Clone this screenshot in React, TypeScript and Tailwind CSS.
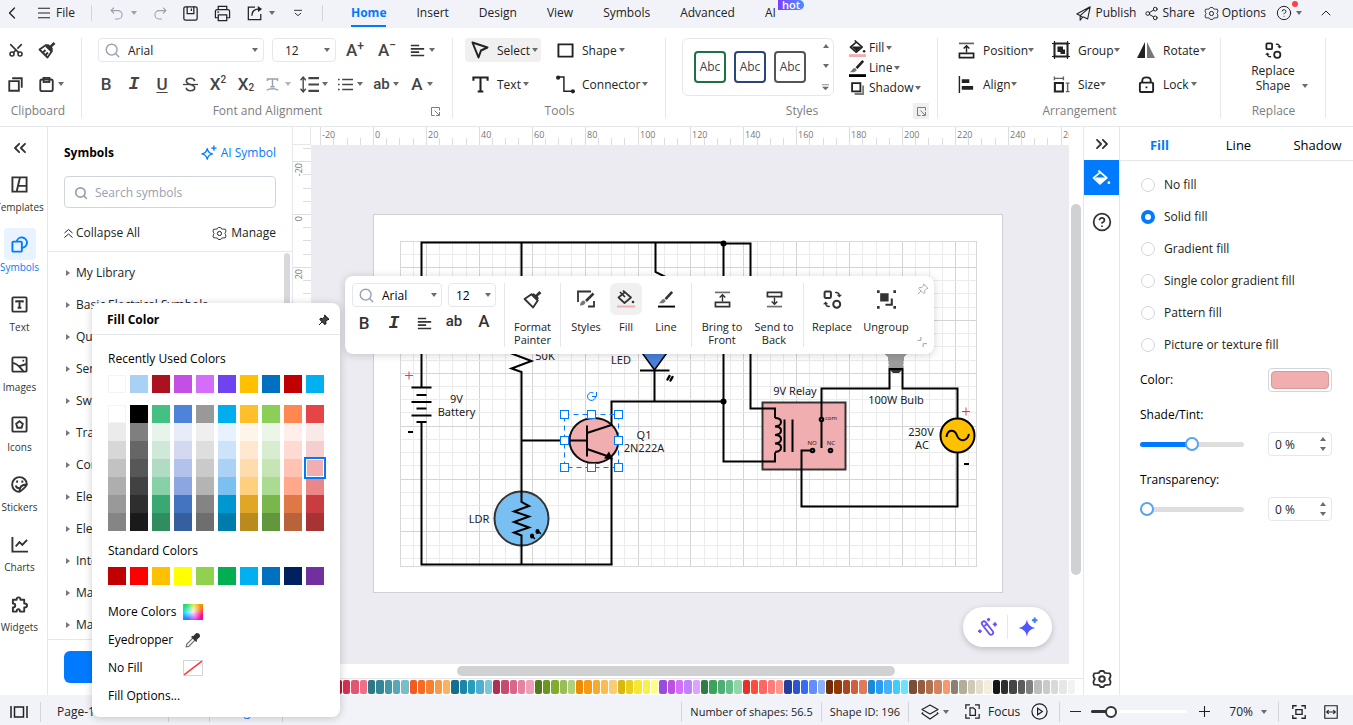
import React, { useState } from "react";
import { ChevronsLeft, ChevronsRight, ChevronUp, ChevronLeft, CircleHelp, Scissors, Share2, Search } from "lucide-react";

interface IconProps {
  size?: number;
  sw?: number;
  className?: string;
  children: React.ReactNode;
}

// Base for all the line icons, drawn on an 18 x 18 grid
function Icon({ size = 18, sw = 2, className = "", children }: IconProps) {
  return (
    <svg
      width={size}
      height={size}
      viewBox="0 0 18 18"
      fill="none"
      stroke="currentColor"
      strokeWidth={sw}
      className={`shrink-0 ${className}`}
      aria-hidden="true"
    >
      {children}
    </svg>
  );
}

function Caret({ className = "" }: { className?: string }) {
  return (
    <svg width="6" height="4" viewBox="0 0 6 4" className={`shrink-0 fill-[#6b6b6b] ${className}`} aria-hidden="true">
      <path d="M0 0h6L3 4z" />
    </svg>
  );
}

const GearIcon = ({ size = 16, sw = 1.4 }: { size?: number; sw?: number }) => (
  <Icon size={size} sw={sw}>
    <path d="M6.2 2.2 7.4 1h3.2l1.2 1.9 2.3.3 2.7.1.8 2.2-.4 1.7-1 1.8 1 1.8.4 1.7-.8 2.2-2.7.1-2.3.3L10.6 17H7.4l-1.2-1.9-2.3-.3-2.7-.1-.8-2.2.4-1.7 1-1.8-1-1.8-.4-1.7.8-2.2 2.7-.1 2.3-.3z" strokeLinejoin="round" transform="translate(.9 .9) scale(.9)" />
    <circle cx="9" cy="9" r="2.500" />
  </Icon>
);

const BrushIcon = ({ size = 18, solid = false }: { size?: number; solid?: boolean }) => (
  <Icon size={size} sw={1.8}>
    <path d="M1.500 8.500 8 4l6 6-4.500 6.500z" strokeLinejoin="round" />
    <path d="M7.500 4.500 10 3l2 1.500L15.500 1 17.500 3 14 6l1 2-1.500 2z" fill="currentColor" stroke="none" />
    {solid && <path d="M5 11.500 7.500 9M7.500 14 10 11.500M8 5l5.500 5.500" />}
  </Icon>
);

// The filled look is half full; the outline one is used in the floating bar
const BucketIcon = ({ size = 18, color = "", outline = false }: { size?: number; color?: string; outline?: boolean }) => (
  <Icon size={size} sw={1.7}>
    <path d="M6 .5 14 7.500l-6.500 5.500L1.500 7.500 7.500 2.500" strokeLinejoin="round" />
    {outline ? <path d="M3 2l5 5" /> : <path d="M2.500 7h11L8 12.500z" fill="currentColor" stroke="none" />}
    <circle cx="16" cy="12" r="1.300" fill="currentColor" stroke="none" />
    {color && <path d="M0 16.500h18" stroke={color} strokeWidth={outline ? 2 : 3} />}
  </Icon>
);

const LineIcon = ({ size = 18, thin = false }: { size?: number; thin?: boolean }) => (
  <Icon size={size}>
    <path d="M15 1 8 8.500" strokeWidth="2.800" />
    <path d="M7.500 9 5 8.500 1 13h4.500L8 11z" fill="#777" stroke="none" />
    <path d="M0 16.500h18" stroke="#000" strokeWidth={thin ? 2 : 3} />
  </Icon>
);

const AlignTextIcon = () => (
  <Icon size={15} sw={2}>
    <path d="M1 3h10M1 7h16M1 11h10M1 15h16" />
  </Icon>
);

const FrontIcon = ({ size = 18 }: { size?: number }) => (
  <Icon size={size} sw={1.8}>
    <path d="M1 1.500h16" className="opacity-70" />
    <path d="M9 11V4.500M6 7l3-3 3 3" strokeWidth="1.500" />
    <path d="M1.500 12h15v4.500h-15z" />
  </Icon>
);

const BackIcon = ({ size = 18 }: { size?: number }) => (
  <Icon size={size} sw={1.8}>
    <path d="M1 16.500h16" className="opacity-70" />
    <path d="M9 7v6.500M6 11l3 3 3-3" strokeWidth="1.500" />
    <path d="M1.500 1.500h15V6h-15z" />
  </Icon>
);

const ReplaceIcon = ({ size = 18 }: { size?: number }) => (
  <Icon size={size} sw={1.9}>
    <rect x="1.500" y="1.500" width="6" height="6" rx="1" />
    <circle cx="13" cy="13.500" r="3.300" />
    <path d="M11.500 2.500c2.500-.5 4 .5 4 3M6.500 15.500c-2.500.5-4-.5-4-3" strokeWidth="1.400" />
    <path d="M13 4.500h5L15.500 7zM0 13.500h5L2.500 11z" fill="currentColor" stroke="none" />
  </Icon>
);

const PinIcon = ({ solid = false }: { solid?: boolean }) => (
  <Icon size={12} sw={1.4} className={solid ? "fill-[#444]" : "text-gray-400"}>
    <path d="M10 1.500 16.500 8l-2 .5-3 3 .5 3-1.500 1.500L2.500 8 4 6.500l3 .5 3-3zM6 12l-4.500 4.500" strokeLinejoin="round" />
  </Icon>
);

const LauncherIcon = () => (
  <Icon size={9} sw={2}>
    <path d="M7 17H1V1h16v6M7 7l9 9M17 10v7h-7" />
  </Icon>
);

const tabs = ["Home", "Insert", "Design", "View", "Symbols", "Advanced"];

function TopBar() {
  return (
    <header className="flex h-7 shrink-0 items-center bg-[#f2f3f9] text-[#222]">
      <div className="flex w-[336px] shrink-0 items-center pb-[2px]">
        <button type="button" aria-label="Back" className="ml-[2px]"><ChevronLeft className="size-5" strokeWidth={1.6} /></button>
        <button type="button" className="ml-4 flex items-center gap-[6px]">
          <Icon size={12} sw={1.6}><path d="M0 2h18M0 9h18M0 16h18" /></Icon>
          File
        </button>
        <span className="ml-4 h-4 w-px bg-gray-300" />
        <button type="button" aria-label="Undo" className="ml-[18px] flex items-center gap-2 text-gray-400">
          <Icon size={13} sw={1.5}><path d="M5.500 1 1.500 5l4 4M1.500 5H11a5 5 0 0 1 0 11.500H7" /></Icon>
          <Caret className="opacity-60" />
        </button>
        <button type="button" aria-label="Redo" className="ml-[17px] text-gray-400">
          <Icon size={13} sw={1.5}><path d="m12.500 1 4 4-4 4M16.500 5H7a5 5 0 0 0 0 11.500h4" /></Icon>
        </button>
        <button type="button" aria-label="Save" className="ml-4">
          <Icon size={15} sw={1.5}><rect x="1" y="1" width="16" height="16" rx="2" /><path d="M5 1v8h8V1M10 3v3" /></Icon>
        </button>
        <button type="button" aria-label="Print" className="ml-4">
          <Icon size={17} sw={1.3}><path d="M4.500 5V1.500h9V5M4.500 13.500h-3V7q0-2 2-2h11q2 0 2 2v6.500h-3" /><path d="M4.500 10.500h9v6h-9zM3.500 7.500h2" /></Icon>
        </button>
        <button type="button" aria-label="Export" className="ml-4 flex items-center gap-[6px]">
          <Icon size={16} sw={1.4}><path d="M9 2.500H1.500v14h14V10" /><path d="M5.500 12c0-5 3-7.500 8-7.500" /><path d="m12 1 5 3.500-4.500 3.500z" fill="currentColor" stroke="none" /></Icon>
          <Caret />
        </button>
        <button type="button" aria-label="More" className="ml-[19px]">
          <Icon size={8} sw={2}><path d="M0 3h18M2 9l7 6 7-6" /></Icon>
        </button>
        <span className="ml-5 h-4 w-px bg-gray-300" />
      </div>
      <nav className="flex h-7 items-stretch gap-7 pl-[15px]">
        {tabs.map((t) => (
          <button
            key={t}
            type="button"
            className={`mr-[2px] mb-px border-b-2 pt-px ${t === "Home" ? "border-[#007bff] font-bold text-[#007bff]" : "border-transparent"}`}
          >
            {t}
          </button>
        ))}
        <button type="button" className="relative mb-px border-b-2 border-transparent pt-px">
          AI
          <span className="absolute top-0 left-[13px] rounded-tl-md rounded-r-full bg-linear-to-r from-[#7c3aff] to-[#3f8cff] px-1 text-[11px] leading-[10px] font-semibold text-white">hot</span>
        </button>
      </nav>
      <div className="ml-auto flex items-center pr-[19px] pb-[2px]">
        <button type="button" className="flex items-center gap-1">
          <Icon size={15} sw={1.3}><path d="M17 1 1 9.500l4 2L17 1l-3 14.500-5.500-2.500M5 11.500V17l3-3.500z" strokeLinejoin="round" /></Icon>
          Publish
        </button>
        <button type="button" className="ml-2 flex items-center gap-[3px]"><Share2 className="size-[15px]" strokeWidth={1.6} />Share</button>
        <button type="button" className="ml-[9px] flex items-center gap-[3px]"><GearIcon size={15} sw={1.2} />Options</button>
        <button type="button" aria-label="Help" className="relative ml-[10px] flex items-center gap-1">
          <CircleHelp className="size-4" strokeWidth={1.5} />
          <Caret />
          <span className="absolute -top-[4px] left-4 size-[6px] rounded-full bg-[#ff4040]" />
        </button>
        <button type="button" aria-label="Collapse ribbon" className="ml-4"><ChevronUp className="size-4" strokeWidth={1.5} /></button>
      </div>
    </header>
  );
}

interface GroupProps {
  label: string;
  className: string;
  launcher?: React.ReactNode;
  children: React.ReactNode;
}

function RibbonGroup({ label, className, launcher, children }: GroupProps) {
  return (
    <section className={`flex h-20 shrink-0 flex-col border-r border-gray-200 ${className}`}>
      <div className="h-16 shrink-0">{children}</div>
      <div className="relative shrink-0 pl-px text-center leading-[18px] text-[#7d7d7d]">
        {label}
        {launcher}
      </div>
    </section>
  );
}

interface ToolButtonProps {
  icon: React.ReactNode;
  label: string;
  className?: string;
  tight?: boolean;
}

function ToolButton({ icon, label, className = "", tight = false }: ToolButtonProps) {
  return (
    <button type="button" className={`flex h-6 items-center rounded ${className}`}>
      <span className="mr-2 flex w-[18px] justify-center">{icon}</span>
      <span className="pt-px">{label}</span>
      <Caret className={tight ? "" : "ml-[2px]"} />
    </button>
  );
}

interface FontSelectProps {
  label: string;
  value: string;
  search?: boolean;
  className: string;
}

function FontSelect({ label, value, search = false, className }: FontSelectProps) {
  return (
    <label className={`flex h-6 items-center rounded border border-gray-200 bg-white ${className}`}>
      {search && <Icon size={15} sw={1.7} className="mr-1 ml-[6px] text-gray-400"><circle cx="8" cy="8" r="6.500" /><path d="m13 13 4 4" /></Icon>}
      <select aria-label={label} defaultValue={value} className="w-0 min-w-0 flex-1 appearance-none bg-transparent pt-px pl-1 outline-none">
        <option>{value}</option>
      </select>
      <Caret />
    </label>
  );
}

const styleCards = [
  { name: "Green style", css: "border-[#1e7145]" },
  { name: "Blue style", css: "border-[#26467d]" },
  { name: "Gray style", css: "border-[#555555]" },
];

const letter = "font-['Roboto','Noto_Sans',sans-serif] text-[17px] leading-5 font-medium";
const italicLetter = "font-['Liberation_Mono',monospace] text-[18px] leading-5 font-bold italic";

function Ribbon() {
  return (
    <div className="flex h-[99px] shrink-0 border-b border-gray-200 bg-white pt-[10px] text-[#222]">
      <RibbonGroup label="Clipboard" className="w-[82px] [&>div:last-child]:pr-[6px]">
        <div className="flex flex-col gap-[10px] pl-2 text-[#333]">
          <div className="flex h-6 items-center gap-[14px]">
            <button type="button" aria-label="Cut"><Scissors className="size-4 -rotate-90" strokeWidth={2.4} /></button>
            <button type="button" aria-label="Format painter"><BrushIcon solid /></button>
          </div>
          <div className="flex h-6 items-center gap-4">
            <button type="button" aria-label="Copy"><Icon size={15} sw={2.2}><path d="M1.500 5h11.500v11.500H1.500z" /><path d="M5 1.500h11.500V13" /></Icon></button>
            <button type="button" aria-label="Paste" className="flex items-center gap-1">
              <Icon size={15} sw={2.2}><rect x="1.500" y="3" width="15" height="14" rx="2" /><rect x="5.500" y="1" width="7" height="5" /></Icon>
              <Caret />
            </button>
          </div>
        </div>
      </RibbonGroup>

      <RibbonGroup
        label="Font and Alignment"
        className="w-[371px]"
        launcher={<button type="button" aria-label="Font settings" className="absolute top-[5px] right-3"><LauncherIcon /></button>}
      >
        <div className="flex h-6 items-center pl-4">
          <FontSelect label="Font" value="Arial" search className="w-[166px] pr-[5px]" />
          <FontSelect label="Font size" value="12" className="ml-2 w-16 pr-[5px] pl-2" />
          <button type="button" aria-label="Increase font size" className={`ml-[10px] flex w-[18px] text-[#444] ${letter}`}>A<span className="-mt-1 text-[12px]">+</span></button>
          <button type="button" aria-label="Decrease font size" className={`ml-[14px] flex w-[18px] text-[#444] ${letter}`}>A<span className="-mt-[5px] text-[12px]">−</span></button>
          <button type="button" aria-label="Align text" className="ml-[14px] flex items-center gap-1 text-[#333]">
            <AlignTextIcon />
            <Caret />
          </button>
        </div>
        <div className="mt-[10px] flex h-6 items-center pl-[10px] text-[#444]">
          <button type="button" className={`w-7 ${letter}`}>B</button>
          <button type="button" className={`w-7 ${italicLetter}`}>I</button>
          <button type="button" className={`w-7 ${letter} underline underline-offset-2`}>U</button>
          <button type="button" aria-label="Strikethrough" className="flex w-7 justify-center">
            <Icon size={15} sw={2}><path d="M14 5c-.5-2.500-2-3.500-5-3.500S4 3 4 4.500 5.500 8 9 9s5 2 5 4-2 3.500-5 3.500-5-1.500-5-3.500" /><path d="M0 9h18" strokeWidth="1.500" /></Icon>
          </button>
          <button type="button" className={`flex w-7 justify-center ${letter}`}>X<span className="text-[10px] leading-3">2</span></button>
          <button type="button" className={`flex w-7 items-end justify-center ${letter}`}>X<span className="text-[10px] leading-3">2</span></button>
          <button type="button" aria-label="Text effects" className="flex w-9 items-center justify-center gap-[6px] text-gray-400">
            <Icon size={13}><path d="M2 4V1.500h14V4M9 1.500V12M6 12h6" /><path d="M1 17c4-3 12-3 16 0" /></Icon>
            <Caret className="opacity-50" />
          </button>
          <button type="button" aria-label="Line spacing" className="flex w-9 items-center justify-center gap-[3px]">
            <Icon size={19} sw={2}><path d="M8 3h10M8 9h10M8 15h10" /><path d="M3 2v14M.5 5 3 2l2.500 3M.5 13 3 16l2.500-3" strokeWidth="1.300" /></Icon>
            <Caret />
          </button>
          <button type="button" aria-label="Bullets" className="flex w-9 items-center justify-center gap-1">
            <Icon size={15} sw={2}><path d="M5 3h13M5 9h13M5 15h13" /><path d="M0 3h2M0 9h2M0 15h2" /></Icon>
            <Caret />
          </button>
          <button type="button" aria-label="Change case" className="flex w-9 items-center justify-center gap-[3px] font-['Roboto','Noto_Sans',sans-serif] text-[15px] font-medium">ab<Caret /></button>
          <button type="button" aria-label="Font color" className={`flex w-9 items-center justify-center gap-1 ${letter}`}>A<Caret /></button>
        </div>
      </RibbonGroup>

      <RibbonGroup label="Tools" className="w-[213px]">
        <div className="grid grid-cols-[85px_1fr] gap-y-[10px] pl-3">
          <ToolButton className="w-19 bg-[#f0f0f0] pl-[6px]" label="Select" icon={<Icon size={18} sw={2}><path d="m1.500 1.500 15 5L10 9.500 7.500 16.500z" strokeLinejoin="round" /></Icon>} />
          <ToolButton className="pl-[6px]" label="Shape" icon={<Icon size={17}><path d="M1.500 2.500h15v13h-15z" /></Icon>} />
          <ToolButton className="pl-[6px]" label="Text" icon={<Icon size={17} sw={2.2}><path d="M1.500 5V1.500h15V5M9 1.500v15M6 16.500h6" /></Icon>} />
          <ToolButton
            className="pl-[6px]"
            label="Connector"
            icon={<Icon size={19} sw={1.4}><path d="M2 2h5.500v13.500H15" /><circle cx="2" cy="2.500" r="2" fill="currentColor" stroke="none" /><circle cx="16" cy="15.500" r="2" fill="currentColor" stroke="none" /></Icon>}
          />
        </div>
      </RibbonGroup>

      <RibbonGroup
        label="Styles"
        className="w-[272px]"
        launcher={<button type="button" aria-label="Style settings" className="absolute top-px right-2 flex size-4 items-center justify-center bg-[#efefef]"><LauncherIcon /></button>}
      >
        <div className="flex pl-4">
          <div className="flex h-[58px] w-[152px] items-center gap-2 rounded-md border border-gray-200 pl-[11px]">
            {styleCards.map((c) => (
              <button key={c.name} type="button" aria-label={c.name} className={`size-8 rounded border-2 text-[12px] text-[#444] ${c.css}`}>Abc</button>
            ))}
            <div className="ml-2 flex flex-col items-center gap-4">
              <Caret className="rotate-180" />
              <Caret />
              <Icon size={7} className="text-[#6b6b6b]"><path d="M0 2h18" /><path d="M0 7h18L9 16z" fill="currentColor" stroke="none" /></Icon>
            </div>
          </div>
          <div className="ml-[15px] flex flex-col">
            {[
              { label: "Fill", icon: <BucketIcon size={17} color="#f0aeb0" /> },
              { label: "Line", icon: <LineIcon size={17} /> },
              { label: "Shadow", icon: <Icon size={13} sw={2.5}><path d="M1.500 1.500H13V13H1.500z" /><path d="M5 16.500h12V5" strokeWidth="3" className="opacity-60" /></Icon> },
            ].map((r) => (
              <button key={r.label} type="button" className="flex h-5 items-center">
                <span className="mr-[3px] flex w-[17px] justify-center">{r.icon}</span>
                {r.label}
                <Caret className="ml-[2px]" />
              </button>
            ))}
          </div>
        </div>
      </RibbonGroup>

      <RibbonGroup label="Arrangement" className="w-[283px]">
        <div className="grid grid-cols-[95px_85px_1fr] gap-y-[10px] pl-[19px]">
          <ToolButton tight label="Position" icon={<FrontIcon size={17} />} />
          <ToolButton
            tight
            label="Group"
            icon={<Icon size={18} sw={2}><path d="M2.500 2.500h13v13h-13z" /><path d="M6.500 6.500H10V10H6.500z" fill="currentColor" /><path d="M12 8.500V12H8.500" /><path d="M0 2.500h5M13 2.500h5M0 15.500h5M13 15.500h5M2.500 0v5M15.500 0v5M2.500 13v5M15.500 13v5" strokeWidth="1.200" /></Icon>}
          />
          <ToolButton tight label="Rotate" icon={<Icon size={18}><path d="M8 1v16H0z" fill="currentColor" stroke="none" /><path d="M10 1v16h8z" fill="#777" stroke="none" /></Icon>} />
          <ToolButton tight label="Align" icon={<Icon size={17}><path d="M1.500 0v18" strokeWidth="1.500" /><path d="M4 5.500h8M4 12.500h12" strokeWidth="4" /></Icon>} />
          <ToolButton
            tight
            label="Size"
            icon={<Icon size={17} sw={1.5}><path d="M2 7.500h8.500v9H2z" strokeWidth="2.200" /><path d="M1.500 2.500H11M1.500.5v4M11 .5v4M15.500 7.500v9M13.500 7.500h4M13.500 16.500h4" className="opacity-70" /></Icon>}
          />
          <ToolButton label="Lock" icon={<Icon size={17} sw={2}><rect x="2" y="7" width="14" height="10" rx="1" /><path d="M4.500 7V5q0-3.500 4.500-3.500T13.500 5v2M9 11v2" /></Icon>} />
        </div>
      </RibbonGroup>

      <RibbonGroup label="Replace" className="w-[105px]">
        <button type="button" className="relative flex w-full flex-col items-center pt-1 leading-[15px]">
          <ReplaceIcon size={17} />
          <span className="mt-1">Replace<br />Shape</span>
          <Caret className="absolute right-[17px] bottom-[5px]" />
        </button>
      </RibbonGroup>
    </div>
  );
}

const navItems = [
  { label: "Templates", icon: <path d="M1.500 1.500h15v15h-15zM6 16.500l3.500-15M7.500 10.500h9" /> },
  { label: "Symbols", icon: <><rect x="1.500" y="6" width="10" height="10.500" rx="1" /><path d="M6 6a5.500 5.500 0 1 1 5.500 6.500" /></> },
  { label: "Text", icon: <><rect x="1.500" y="1.500" width="15" height="15" rx="1" /><path d="M5.500 7V5.500h7V7M9 5.500v7M7 12.500h4" /></> },
  { label: "Images", icon: <><rect x="1.500" y="1.500" width="15" height="15" rx="1" /><path d="M1.500 7.500c6 0 8 5 12 9M8 11l8.500-2.500" /><circle cx="13" cy="5" r="1" fill="currentColor" stroke="none" /></> },
  { label: "Icons", icon: <><rect x="1.500" y="1.500" width="15" height="15" rx="1" /><path d="m9 5.500 3.500 2.700-1.300 4.300H6.800L5.500 8.200z" /></> },
  { label: "Stickers", icon: <><path d="M16.800 9A7.800 7.800 0 1 0 9 16.800c1 0 7.800-6.500 7.800-7.800zM9 16.500c0-5 3-7.500 7.500-7.500M5 10c.5 2 2 3 4 3" /><path d="M5.500 6h2M11 6h2" strokeWidth="2.500" /></> },
  { label: "Charts", icon: <path d="M1.500 1v15.500H18M5 11l4-4.500 3 3L17 4" /> },
  { label: "Widgets", icon: <path d="M2 4h4q0-2.500 2-2.500T10 4h4v4q3 0 3 2t-3 2v4.500H9.500q0-2.500-1.700-2.500T6 16.500H2V12q2.500 0 2.500-2T2 8z" strokeLinejoin="round" /> },
];

function NavRail() {
  return (
    <nav className="flex w-12 shrink-0 flex-col border-r border-gray-200 bg-white text-[#333]">
      <button type="button" aria-label="Collapse panel" className="flex h-[41px] w-10 items-center justify-center"><ChevronsLeft className="size-5" strokeWidth={2.2} /></button>
      {navItems.map((n) => {
        const active = n.label === "Symbols";
        return (
          <button key={n.label} type="button" className={`flex h-15 w-[39px] flex-col items-center text-[10px] leading-[14px] ${active ? "text-[#007bff]" : ""}`}>
            <span className={`flex size-8 shrink-0 items-center justify-center rounded ${active ? "bg-[#e8f3ff]" : ""}`}>
              <Icon size={17} sw={2}>{n.icon}</Icon>
            </span>
            {n.label}
          </button>
        );
      })}
    </nav>
  );
}

const libraries = [
  "My Library",
  "Basic Electrical Symbols",
  "Qualifying",
  "Semiconductor",
  "Switches",
  "Transmission",
  "Composite",
  "Electrical",
  "Electronic",
  "Integrated",
  "Machines",
  "Maintenance",
];

function SymbolsPanel() {
  return (
    <aside className="flex w-[245px] shrink-0 flex-col border-r border-gray-200 bg-white text-[#222]">
      <div className="flex items-center justify-between px-4 pt-[17px]">
        <h2 className="font-bold text-black">Symbols</h2>
        <button type="button" className="flex items-center gap-1 text-[#007bff]">
          <Icon size={16} sw={1.5}><path d="M7 4q1 5 6 6-5 1-6 6-1-5-6-6 5-1 6-6zM14.500.5v6M11.500 3.500h6" strokeLinejoin="round" /></Icon>
          AI Symbol
        </button>
      </div>
      <label className="mx-4 mt-[14px] flex h-8 items-center rounded border border-gray-300 pt-px pl-[9px]">
        <Search className="size-[14px] text-gray-400" strokeWidth={3} />
        <input aria-label="Search symbols" placeholder="Search symbols" className="ml-[7px] w-0 flex-1 outline-none placeholder:text-gray-400" />
      </label>
      <div className="flex h-11 items-center justify-between border-b border-gray-200 px-4 pt-[7px]">
        <button type="button" className="flex items-center gap-[3px]">
          <Icon size={9} sw={2}><path d="m1 8 8-7 8 7M1 17l8-7 8 7" /></Icon>
          Collapse All
        </button>
        <button type="button" className="flex items-center gap-1"><GearIcon size={15} sw={1.2} />Manage</button>
      </div>
      <div className="flex min-h-0 flex-1 overflow-hidden pt-[5px]">
        <ul className="flex-1">
          {libraries.map((l) => (
            <li key={l}>
              <button type="button" className="flex h-8 items-center gap-[6px] pl-[18px]">
                <svg width="4" height="6" viewBox="0 0 4 6" className="fill-[#777]" aria-hidden="true"><path d="M0 0v6l4-3z" /></svg>
                {l}
              </button>
            </li>
          ))}
        </ul>
        <div className="-mt-1 mr-[2px] h-60 w-[6px] rounded-full bg-[#d9d9dd]" />
      </div>
      <div className="border-t border-gray-200 px-4 pt-[11px] pb-3">
        <button type="button" className="block h-8 w-full rounded-md bg-[#007bff]" aria-label="More symbols" />
      </div>
    </aside>
  );
}

// One major ruler step is 20 units, split into four ticks
const STEP = 52.9;
const range = (a: number, b: number) => Array.from({ length: b - a }, (_, i) => a + i);

function TopRuler() {
  return (
    <svg width="100%" height="18" className="block bg-white text-[9px]" aria-hidden="true">
      {range(-4, 60).map((i) => {
        const x = Math.round(62 + (i * STEP) / 4) + 0.5;
        const major = i % 4 === 0;
        return <path key={i} d={`M${x} ${major ? 0 : 11}V18`} stroke="#dcdce2" />;
      })}
      {range(-1, 14).map((i) => (
        <text key={i} x={Math.round(64 + i * STEP)} y="11" fill="#777">{i * 20}</text>
      ))}
    </svg>
  );
}

function SideRuler() {
  return (
    <svg width="18" height="100%" className="block h-full bg-white text-[9px]" aria-hidden="true">
      {range(-5, 36).map((i) => {
        const y = Math.round(69 + (i * STEP) / 4) + 0.5;
        const major = i % 4 === 0;
        return <path key={i} d={`M${major ? 0 : 10} ${y}H18`} stroke="#dcdce2" />;
      })}
      {range(-1, 9).map((i) => (
        <text key={i} transform={`translate(9 ${Math.round(71 + i * STEP)}) rotate(-90)`} textAnchor="end" fill="#777">{i * 20}</text>
      ))}
    </svg>
  );
}

// The drawing sheet, in screen coordinates
function Circuit() {
  const handles = [564, 591, 618].flatMap((x) => [414, 440, 467].map((y) => [x, y])).filter(([x, y]) => x !== 591 || y !== 440);
  return (
    <svg width="758" height="518" viewBox="311 145 758 518" className="block max-w-none font-['Noto_Sans',sans-serif] text-[11px]" role="img" aria-label="Light sensor circuit">
      <rect x="373.5" y="214.5" width="629" height="378" fill="#fff" stroke="#d0d0d4" />
      {range(1, 44).map((i) => {
        const x = Math.round(399.5 + (i * STEP) / 4) + 0.5;
        return <path key={i} d={`M${x} 241V567`} stroke={i % 4 === 2 ? "#d4d4d6" : "#ebebeb"} />;
      })}
      {range(1, 25).map((i) => {
        const y = Math.round(240.5 + (i * STEP) / 4) + 0.5;
        return <path key={i} d={`M400 ${y}H977`} stroke={i % 4 === 2 ? "#d4d4d6" : "#ebebeb"} />;
      })}
      <rect x="400.5" y="241.5" width="576" height="325" fill="none" stroke="#d8d8da" />

      <rect x="762.5" y="402.5" width="83" height="67" fill="#f0aeb0" stroke="#333" strokeWidth="2" />
      <circle cx="521.5" cy="518.5" r="27" fill="#79bff2" stroke="#333" strokeWidth="2" />
      <ellipse cx="594" cy="440.5" rx="24.5" ry="22.5" fill="#f0aeb0" stroke="#111" strokeWidth="2" />
      <circle cx="957.5" cy="435.5" r="17" fill="#ffc000" stroke="#000" strokeWidth="2" />
      <path d="M640 350h29l-14.500 20z" fill="#4a80d9" stroke="#000" strokeWidth="1.5" />
      <path d="M882 352h27l-5 5v4l-1 1 1 1-1 2 1 2-2 3h-12l-2-3 1-2-1-2 1-1-1-1v-4z" fill="#9a9c9b" />
      <path d="M889 369h14l-4 4h-6z" fill="#333" />

      <g fill="none" stroke="#000" strokeWidth="2">
        <path d="M421.500 387.500v-145h302M421.500 422v142.500h191" />
        <path d="M411.500 387.500h20M416.500 395h10M411.500 402h20M416.500 408.500h10M411.500 415.500h20M416.500 422h10" />
        <path d="M521.500 242.500v104l-10 7 20 7.500-20 7.500 10 3.500V502l7.500 4-15 5.500 15 5-15 5.500 15 5.500-15 5 7.500 3v29" />
        <path d="M655.500 242.500V272l12 6" />
        <path d="M521.500 440.500h65.500M587 425.500v31M587 433l24.500-8v-23.500h112M587 449l24.500 8.500v107" />
        <path d="M654.500 370v31.500M640 370.500h29.500" />
        <path d="M723.500 243.500v218H775v-9M723.500 243.500h27v165H775V418" />
        <path d="M775 418c8 0 8 8 0 8.500 8 0 8 8 0 8.500 8 0 8 8 0 8.500 8 0 8 8 0 8.500M784.500 419.500V452M792.500 419.500V452" />
        <path d="M821.500 448v-59.500h68V369h13v19.500h55v29.500M957.500 453v53.500h-156v-56H812" />
        <path d="M946.500 437c1-8 8-8 10.500-1.500s10 6.500 12-1.500" />
      </g>
      <path d="M613 459.500l-9-1 5-7z" />
      <circle cx="723.5" cy="243.5" r="3" />
      <circle cx="723.5" cy="401.5" r="3" />
      <g stroke="#000" strokeWidth="2" fill="#777">
        <circle cx="821.5" cy="419.5" r="1.8" />
        <circle cx="812.5" cy="450.5" r="1.8" />
        <circle cx="830.5" cy="450.5" r="1.8" />
      </g>
      <g stroke="#000" strokeLinecap="round">
        <path d="M532 535.500v1M537.500 531v1" strokeWidth="4" />
        <path d="M532 536l2.500 2.500M538 531l2.500 2.500" strokeWidth="1.5" />
        <path d="M667.500 379.500l2-3.500M670.500 380.500l2-3.500" strokeWidth="2.5" />
      </g>

      <g fill="#222" textAnchor="middle">
        <text x="456.5" y="403">9V</text>
        <text x="456.5" y="416">Battery</text>
        <text x="545" y="360">50K</text>
        <text x="621" y="364">LED</text>
        <text x="644" y="439">Q1</text>
        <text x="644" y="452">2N222A</text>
        <text x="479" y="523">LDR</text>
        <text x="795" y="395">9V Relay</text>
        <text x="896" y="404">100W Bulb</text>
        <text x="921" y="436">230V</text>
        <text x="922" y="449">AC</text>
        <g className="text-[6px]">
          <text x="831" y="420">com</text>
          <text x="812" y="445">NO</text>
          <text x="831" y="445">NC</text>
        </g>
      </g>
      <path d="M405 375.500h8M409 371.500v8M962 411.500h8M966 407.500v8" stroke="#e0404c" />
      <path d="M408 432h5M964 464h5" stroke="#000" strokeWidth="2" />

      <g fill="#fff" stroke="#007bff">
        <rect x="564.5" y="414.5" width="54" height="53" fill="none" strokeDasharray="5 4" />
        {handles.map(([x, y]) => (
          <rect key={`${x}-${y}`} x={x - 3.5} y={y - 3.5} width="8" height="8" />
        ))}
        <path d="M593.500 393a4 4 0 1 0 2 3.500M592 396.500h4.500V392" fill="none" />
      </g>
    </svg>
  );
}

// Swatches of the quick colour bar, five shades in each run
const quickColors = [
  "#8c0d1a", "#a31020", "#b81226", "#c8102e", "#c8102e", "#c8102e", "#d9304c", "#e25574", "#ef6f86",
  "#2c7885", "#338795", "#3f98a6", "#58a9b5", "#7bbcc6", "#f4591f", "#f66b22", "#f78030", "#f99a45", "#fbb15f",
  "#136f8d", "#1a87a8", "#289cbd", "#4db0cc", "#7cc6db", "#b02e56", "#c94a70", "#d9678a", "#e583a0", "#eea0b8",
  "#547a18", "#6b961f", "#80ad30", "#98bf55", "#b0d07c", "#f08a00", "#f59a12", "#f8aa2e", "#fabb52", "#fccb78",
  "#d6b80f", "#e9cf1a", "#f7e733", "#f8f04c", "#ffff80",
  "#9a4bdc", "#bd50e0", "#d36dfa", "#c080ff", "#dba3ff", "#2d7d46", "#3ba35a", "#4fad75", "#64bf8a", "#90d6a8",
  "#e6302b", "#ff4a3d", "#ff6660", "#ff7c78", "#ff958c", "#213f9e", "#2c55cf", "#366bf5", "#628cff", "#8cb1f8",
  "#6f2c05", "#933800", "#ab4524", "#d0603d", "#e07a58", "#198bd6", "#2b9cf5", "#46b0ff", "#3bcfff", "#6be3ff",
  "#7a4d35", "#955c3f", "#b07050", "#d18460", "#f59a6c", "#8c8075", "#b5ad9c", "#cfcab8", "#e5ddcd", "#f3eddc",
  "#161616", "#2e2e2e", "#454545", "#5c5c5c", "#808080", "#bdbdbd", "#cacaca", "#d9d9d9", "#e6e6e6", "#f2f2f2", "#ffffff",
];

const miniLabel = "flex shrink-0 flex-col items-center text-[11px] leading-[13px] text-[#222]";
const miniIcon = "mb-[5px] flex size-8 items-center justify-center rounded-md text-[#333]";

function FloatingToolbar() {
  return (
    <div className="absolute top-[149px] left-[52px] flex h-[78px] w-[589px] rounded-lg bg-white py-[7px] shadow-[0_1px_8px_rgba(0,0,0,0.18)]">
      <div className="w-[160px] shrink-0 border-r border-gray-200 pl-[7px]">
        <div className="flex gap-[6px]">
          <FontSelect label="Shape font" value="Arial" search className="w-[90px] pr-1" />
          <FontSelect label="Shape font size" value="12" className="w-12 pr-1 pl-[3px]" />
        </div>
        <div className="mt-1 flex h-6 items-center text-[#333]">
          <button type="button" className={`w-6 ${letter}`}>B</button>
          <button type="button" className={`w-9 ${italicLetter}`}>I</button>
          <button type="button" aria-label="Align" className="flex w-6 justify-center"><AlignTextIcon /></button>
          <button type="button" className="w-9 pb-1 font-['Roboto','Noto_Sans',sans-serif] text-[15px] leading-5 font-medium">ab</button>
          <button type="button" className={`w-6 pb-1 ${letter}`}>A</button>
        </div>
      </div>
      <div className="flex w-14 shrink-0 justify-center border-r border-gray-200">
        <button type="button" className={miniLabel}><span className={miniIcon}><BrushIcon size={19} /></span>Format<br />Painter</button>
      </div>
      <div className="flex w-[131px] shrink-0 border-r border-gray-200 pl-[5px]">
        <button type="button" className={`w-10 ${miniLabel}`}>
          <span className={miniIcon}>
            <Icon size={18} sw={1.8}><path d="M1 12V1.500h13" /><path d="M17 11v5.500h-6" /><path d="M16.500 3.500 9 11" strokeWidth="2.500" /><path d="M3 15.500c0-3 2-5 4-5L8.500 12C8.500 14 6 16 3 15.500z" fill="#777" stroke="none" /></Icon>
          </span>
          Styles
        </button>
        <button type="button" className={`w-10 ${miniLabel}`}><span className={`${miniIcon} bg-[#f0f0f0]`}><BucketIcon color="#f0aeb0" outline /></span>Fill</button>
        <button type="button" className={`w-10 ${miniLabel}`}><span className={miniIcon}><LineIcon size={17} thin /></span>Line</button>
      </div>
      <div className="flex w-[112px] shrink-0 border-r border-gray-200 pl-1">
        <button type="button" className={`w-[52px] ${miniLabel}`}><span className={miniIcon}><FrontIcon size={17} /></span>Bring to<br />Front</button>
        <button type="button" className={`w-[52px] ${miniLabel}`}><span className={miniIcon}><BackIcon size={17} /></span>Send to<br />Back</button>
      </div>
      <div className="flex shrink-0 pl-[2px]">
        <button type="button" className={`w-[52px] ${miniLabel}`}><span className={miniIcon}><ReplaceIcon size={19} /></span>Replace</button>
        <button type="button" className={`w-14 ${miniLabel}`}>
          <span className={miniIcon}>
            <Icon size={19}><path d="M4 4h6v6H4z" fill="currentColor" /><path d="M14 8v6H8" /><path d="M0 1.500h2.500M15.500 1.500H18M0 16.500h2.500M15.500 16.500H18" strokeWidth="2.500" /></Icon>
          </span>
          Ungroup
        </button>
      </div>
      <div className="flex w-5 flex-col justify-between pl-[3px]">
        <button type="button" aria-label="Pin toolbar"><PinIcon /></button>
        <Icon size={10} sw={1.8} className="text-gray-400"><path d="M1 6h6V0M11 18v-6h7" /></Icon>
      </div>
    </div>
  );
}

function CanvasArea() {
  return (
    <main className="relative flex min-w-0 flex-1 flex-col bg-white">
      <div className="flex h-[18px] shrink-0">
        <div className="w-[18px] shrink-0 border-r border-b border-gray-200" />
        <div className="mr-[14px] min-w-0 flex-1 overflow-hidden"><TopRuler /></div>
      </div>
      <div className="flex min-h-0 flex-1">
        <div className="w-[18px] shrink-0 overflow-hidden"><SideRuler /></div>
        <div className="min-w-0 flex-1 overflow-hidden bg-[#ebebf1]"><Circuit /></div>
        <div className="w-[14px] shrink-0 pt-[59px] pl-[2px]"><div className="h-[371px] w-[10px] rounded-full bg-[#d0d1d3]" /></div>
      </div>
      <div className="h-[15px] shrink-0 border-b border-gray-200 pt-[2px] pl-[164px]"><div className="h-[10px] w-[438px] rounded-full bg-[#d0d1d3]" /></div>
      <div className="flex h-4 shrink-0 gap-px pt-px pb-px">
        {quickColors.map((c, i) => (
          <button key={i} type="button" aria-label={`Color ${c}`} className="min-w-0 flex-1 rounded-xs" style={{ backgroundColor: c }} />
        ))}
      </div>
      <FloatingToolbar />
      <div className="absolute right-[31px] bottom-[48px] flex h-10 w-[89px] items-center rounded-full bg-white shadow-[0_2px_6px_rgba(0,0,0,0.2)]">
        <button type="button" aria-label="AI tools" className="flex flex-1 justify-center pl-1 text-[#6d52f5]">
          <Icon size={19} sw={1.7}><rect x="7" y="2" width="4" height="15" rx="2" transform="rotate(-38 9 9.500)" /><path d="M8.500 1.500h3M10 0v3M14 6h4M16 4v4M0 12.500h3.500M1.800 10.800v3.500" /><path d="m6 7.500 3-2" /></Icon>
        </button>
        <span className="h-6 w-px bg-gray-200" />
        <button type="button" aria-label="AI assistant" className="flex flex-1 justify-center pr-1 text-[#4f57ff]">
          <Icon size={20}><path d="M8 2.500q1 6 7.500 7.500-6.500 1-7.500 7.500Q7 11 .5 10 7 8.500 8 2.500z" fill="currentColor" stroke="none" /><path d="M15 .5v5M12.500 3h5" stroke="#3f7bff" strokeWidth="1.8" /></Icon>
        </button>
      </div>
    </main>
  );
}

function SideStrip() {
  return (
    <div className="flex w-[37px] shrink-0 flex-col items-center border-x border-gray-200 bg-white text-[#333]">
      <button type="button" aria-label="Expand" className="flex h-[33px] items-center"><ChevronsRight className="size-5" strokeWidth={2.2} /></button>
      <button type="button" aria-label="Fill panel" className="flex h-[35px] w-full items-center justify-center bg-[#007bff] pt-1 text-white"><BucketIcon size={19} /></button>
      <button type="button" aria-label="Help" className="mt-[17px]"><CircleHelp className="size-5" strokeWidth={2.1} /></button>
      <button type="button" aria-label="Settings" className="mt-auto mb-[6px]"><GearIcon size={20} sw={1.8} /></button>
    </div>
  );
}

const fillKinds = ["No fill", "Solid fill", "Gradient fill", "Single color gradient fill", "Pattern fill", "Picture or texture fill"];

const slider =
  "h-[5px] w-[104px] appearance-none rounded-full [&::-webkit-slider-thumb]:size-[14px] [&::-webkit-slider-thumb]:appearance-none [&::-webkit-slider-thumb]:rounded-full [&::-webkit-slider-thumb]:border-2 [&::-webkit-slider-thumb]:border-[#58a3f2] [&::-webkit-slider-thumb]:bg-white";

function PercentRow({ id, label, value, track }: { id: string; label: string; value: number; track: string }) {
  return (
    <div className="mb-[14px]">
      <label htmlFor={id} className="block h-5 leading-5 text-black">{label}</label>
      <div className="mt-[7px] flex h-6 items-center justify-between pr-[21px]">
        <input id={id} type="range" min={0} max={100} defaultValue={value} className={`${slider} ${track}`} />
        <div className="flex h-6 w-16 items-center rounded border border-gray-200 pr-[5px]">
          <input aria-label={`${label} percent`} defaultValue="0 %" className="w-0 flex-1 pt-px pl-[6px] outline-none" />
          <span className="flex flex-col gap-[6px]"><Caret className="rotate-180" /><Caret /></span>
        </div>
      </div>
    </div>
  );
}

function FormatPanel() {
  const [kind, setKind] = useState("Solid fill");
  return (
    <aside className="w-[233px] shrink-0 overflow-hidden bg-white text-[#222]">
      <div className="flex h-[34px] border-b border-gray-200 pt-[2px] text-[13px] text-black">
        <button type="button" className="w-[79px] shrink-0 font-bold text-[#007bff]">Fill</button>
        <button type="button" className="w-[79px] shrink-0">Line</button>
        <button type="button" className="w-[79px] shrink-0">Shadow</button>
      </div>
      <div className="pt-2 pl-5">
        {fillKinds.map((k) => (
          <label key={k} className="flex h-8 items-center gap-[9px] pl-px">
            <input
              type="radio"
              name="fill"
              checked={kind === k}
              onChange={() => setKind(k)}
              className="size-[14px] appearance-none rounded-full border border-gray-300 bg-white checked:border-4 checked:border-[#007bff]"
            />
            {k}
          </label>
        ))}
        <div className="mt-[7px] mb-[13px] flex h-6 items-center justify-between pr-[21px]">
          <span className="text-black">Color:</span>
          <button type="button" aria-label="Fill color" className="h-6 w-16 rounded border border-gray-300 p-[2px]"><span className="block h-full rounded-sm border border-[#d69a9c] bg-[#f0aeb0]" /></button>
        </div>
        <PercentRow id="shade" label="Shade/Tint:" value={50} track="bg-[linear-gradient(to_right,#007bff_50%,#dedede_50%)]" />
        <PercentRow id="transparency" label="Transparency:" value={0} track="bg-[#dedede]" />
      </div>
    </aside>
  );
}

const recent = ["#ffffff", "#a9d1f5", "#ac1120", "#c34fe4", "#d36dfa", "#6f42f2", "#ffc000", "#0070c0", "#c00000", "#00b0f0"];
const standard = ["#c00000", "#ff0000", "#ffc000", "#ffff00", "#92d050", "#00b050", "#00b0f0", "#0070c0", "#002060", "#7030a0"];
const theme = [
  ["#ffffff", "#000000", "#44c182", "#4d84d9", "#999999", "#00adee", "#ffbf2a", "#8ccf58", "#ff8850", "#e64548"],
  ["#ebebeb", "#7f7f7f", "#e7f4ec", "#e8ecf8", "#efefef", "#e6f2fd", "#fff4e8", "#ebf6e8", "#ffeeea", "#fae9e9"],
  ["#d7d7d7", "#666666", "#cfe9d9", "#d2d9f1", "#dedede", "#cde3f9", "#ffe8cf", "#d8edd0", "#ffdad2", "#f5cecf"],
  ["#c2c2c2", "#575757", "#b0dcc3", "#b3c2ea", "#cacaca", "#abd1f5", "#ffdcac", "#c5e5b5", "#ffc2b3", "#f0aeb0"],
  ["#aeaeae", "#424242", "#87d1a7", "#8ba6e1", "#b4b4b4", "#7cc0f2", "#ffcf80", "#aadb90", "#ffa88c", "#eb8789"],
  ["#999999", "#2e2e2e", "#3aa872", "#4473c0", "#848484", "#0097d1", "#e0a625", "#79b64c", "#e07845", "#c93d40"],
  ["#858585", "#1a1a1a", "#2f8d5f", "#355f9e", "#6e6e6e", "#007cac", "#ba8b1c", "#63973e", "#b9633a", "#a73335"],
];

function Swatches({ colors, selected }: { colors: string[]; selected?: string }) {
  return (
    <div className="flex gap-1">
      {colors.map((c) => (
        <button
          key={c}
          type="button"
          aria-label={c}
          className={`size-[18px] ${c === "#ffffff" ? "border border-gray-100" : ""} ${c === selected ? "relative border border-white outline-2 outline-[#007bff]" : ""}`}
          style={{ backgroundColor: c }}
        />
      ))}
    </div>
  );
}

function FillPopup() {
  return (
    <div role="dialog" aria-label="Fill Color" className="absolute bottom-2 left-[92px] w-[248px] rounded-lg bg-white text-black shadow-[0_1px_8px_rgba(0,0,0,0.2)]">
      <div className="flex h-8 items-center justify-between border-b border-gray-200 pt-[2px] pr-[10px] pl-[15px]">
        <h3 className="font-bold">Fill Color</h3>
        <button type="button" aria-label="Pin"><PinIcon solid /></button>
      </div>
      <div className="px-4 pt-3 pb-[7px]">
        <p className="mb-[6px] h-[22px] leading-6">Recently Used Colors</p>
        <Swatches colors={recent} />
        <div className="mt-3">
          {theme.map((row) => (
            <Swatches key={row[0]} colors={row} selected="#f0aeb0" />
          ))}
        </div>
        <p className="mt-2 mb-1 h-6 leading-6">Standard Colors</p>
        <Swatches colors={standard} />
        <div className="mt-[13px] flex flex-col">
          <button type="button" className="flex h-7 items-center">
            <span className="w-[75px] text-left">More Colors</span>
            <span className="h-4 w-5 bg-[radial-gradient(circle,rgba(255,255,255,.9),transparent_75%),conic-gradient(from_60deg,#ff8000,#ff0080,#d020ff,#3060ff,#00e0ff,#20e060,#e0e020,#ff8000)]" />
          </button>
          <button type="button" className="flex h-7 items-center">
            <span className="w-[75px] text-left">Eyedropper</span>
            <Icon size={15} sw={1.5} className="ml-[2px] text-[#333]"><path d="M10 5.500 2 13.500 1.500 16.500l3-.5L12.500 8" className="opacity-70" /><path d="m8 4 6 6M10 5l4-4q3 0 3 3l-4 4z" fill="currentColor" strokeWidth="2" /></Icon>
          </button>
          <button type="button" className="flex h-7 items-center">
            <span className="w-[75px] text-left">No Fill</span>
            <svg width="20" height="16" className="border border-gray-300" aria-hidden="true"><path d="M0 14 18 0" stroke="#ff3030" strokeWidth="1.4" /></svg>
          </button>
          <button type="button" className="flex h-7 items-center">Fill Options...</button>
        </div>
      </div>
    </div>
  );
}

function StatusBar() {
  return (
    <footer className="flex h-[30px] shrink-0 items-center bg-[#f2f3f9] pt-[3px] text-[#222]">
      <button type="button" aria-label="Page list" className="ml-[10px]"><Icon size={18} sw={1.5}><path d="M4.500 4h9v10h-9zM1 3v12M17 3v12" /></Icon></button>
      <span className="ml-3 h-5 w-px bg-gray-300" />
      <button type="button" className="ml-4">Page-1</button>
      <span className="ml-[73px] h-5 w-px bg-gray-300" />
      <span className="ml-10 h-5 w-px bg-gray-300" />
      <button type="button" className="ml-5 pt-px text-[#007bff]">Page-1</button>
      <span className="ml-[14px] h-5 w-px bg-gray-300" />
      <div className="ml-auto flex h-5 items-center">
        <span className="h-5 border-l border-gray-300 pl-2 text-[11px] leading-5">Number of shapes: 56.5</span>
        <span className="ml-2 h-5 border-l border-gray-300 pl-2 text-[11px] leading-5">Shape ID: 196</span>
        <span className="ml-2 h-5 w-px bg-gray-300" />
        <button type="button" aria-label="Layers" className="ml-3 flex items-center gap-1">
          <Icon size={18} sw={1.2}><path d="m9 2 8 4.500L9 11 1 6.500zM2 9.500 1 10.500 9 16l8-5.500-1-1" strokeLinejoin="round" /></Icon>
          <Caret />
        </button>
        <button type="button" className="ml-4 flex items-center gap-2">
          <Icon size={15} sw={1.5}><path d="M1 6V1h5M12 1h5v5M17 12v5h-5M6 17H1v-5M6 4.500h4l2.500 2.500v6.500H6z" /></Icon>
          Focus
        </button>
        <button type="button" aria-label="Present" className="ml-[11px]"><Icon size={17} sw={1.3}><circle cx="9" cy="9" r="8" /><path d="M7 5.500 12 9l-5 3.500z" /></Icon></button>
        <span className="ml-[11px] h-5 w-px bg-gray-300" />
        <button type="button" aria-label="Zoom out" className="ml-[10px]"><Icon size={11} sw={1.6}><path d="M0 9h18" /></Icon></button>
        <input
          type="range"
          aria-label="Zoom"
          min={0}
          max={100}
          defaultValue={16}
          className="ml-[10px] h-[3px] w-24 appearance-none rounded-full bg-[linear-gradient(to_right,#333_20%,#fff_20%)] [&::-webkit-slider-thumb]:size-3 [&::-webkit-slider-thumb]:appearance-none [&::-webkit-slider-thumb]:rounded-full [&::-webkit-slider-thumb]:border-2 [&::-webkit-slider-thumb]:border-[#333] [&::-webkit-slider-thumb]:bg-white"
        />
        <button type="button" aria-label="Zoom in" className="ml-3"><Icon size={11} sw={1.8}><path d="M0 9h18M9 0v18" /></Icon></button>
        <button type="button" className="ml-[19px] flex items-center gap-2">70%<Caret /></button>
        <span className="ml-[11px] h-5 w-px bg-gray-300" />
        <button type="button" aria-label="Fit page" className="ml-[13px]"><Icon size={14} sw={1.7}><path d="M1 5V1h5M12 1h5v4M17 13v4h-5M6 17H1v-4M5 6h8v6H5z" /></Icon></button>
        <button type="button" aria-label="Fit width" className="mr-[15px] ml-[18px]"><Icon size={14} sw={1.5}><path d="M1 1h16v16H1zM3.500 9h11M6 6.500 3.500 9 6 11.500M12 6.500l2.500 2.500-2.500 2.500" /></Icon></button>
      </div>
    </footer>
  );
}

export default function App() {
  return (
    <div className="relative flex h-screen min-w-[1280px] flex-col overflow-hidden bg-white font-['Open_Sans','Noto_Sans',sans-serif] text-[12px] leading-[18px]">
      <TopBar />
      <Ribbon />
      <div className="flex min-h-0 flex-1">
        <NavRail />
        <SymbolsPanel />
        <CanvasArea />
        <SideStrip />
        <FormatPanel />
      </div>
      <StatusBar />
      <FillPopup />
    </div>
  );
}
